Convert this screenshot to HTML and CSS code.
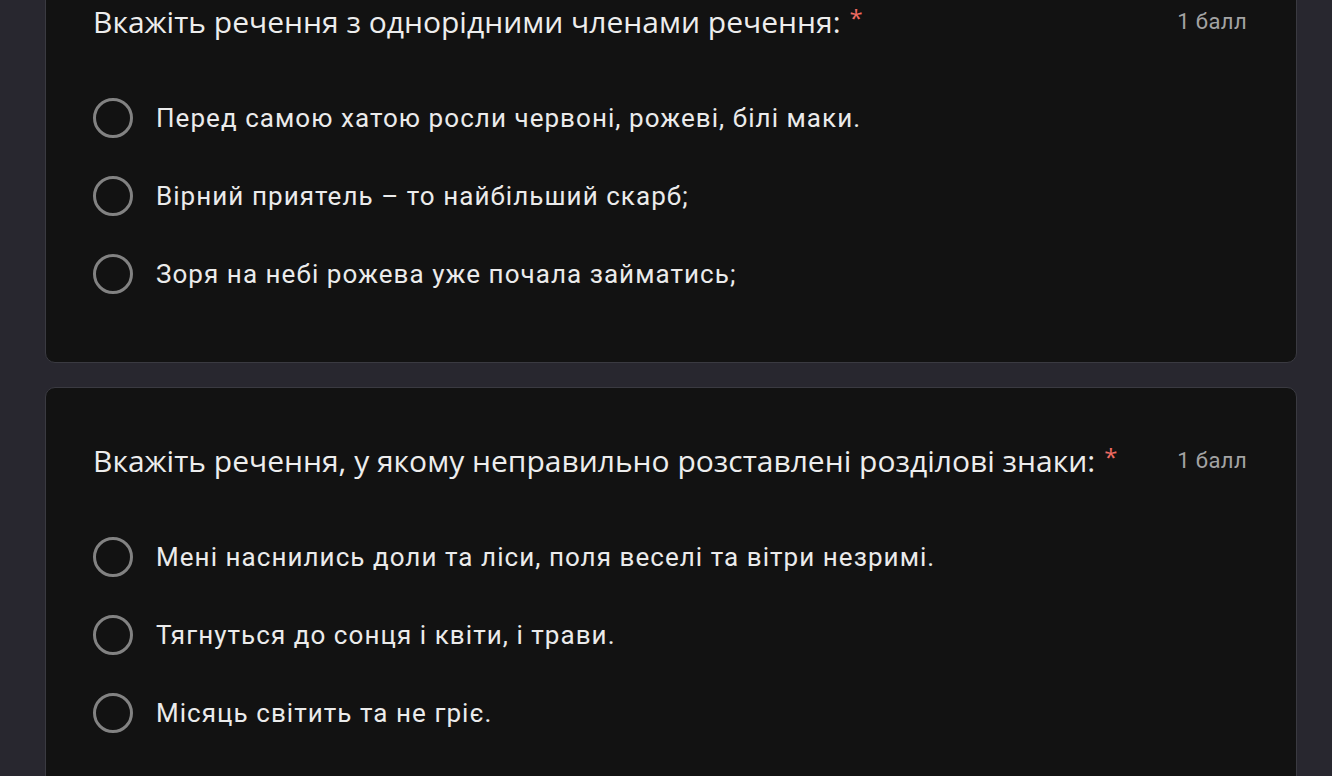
FILE: index.html
```html
<!DOCTYPE html>
<html lang="uk">
<head>
<meta charset="utf-8">
<link rel="stylesheet" href="styles.css">
</head>
<body>
<main class="page">
  <section class="card card-first">
    <div class="q-head">
      <h2 class="q-title">Вкажіть речення з однорідними членами речення:<span class="req">*</span></h2>
      <span class="points">1 балл</span>
    </div>
    <ul class="options">
      <li class="option"><span class="radio"></span><span class="opt-text">Перед самою хатою росли червоні, рожеві, білі маки.</span></li>
      <li class="option"><span class="radio"></span><span class="opt-text">Вірний приятель – то найбільший скарб;</span></li>
      <li class="option"><span class="radio"></span><span class="opt-text">Зоря на небі рожева уже почала займатись;</span></li>
    </ul>
  </section>
  <section class="card">
    <div class="q-head">
      <h2 class="q-title">Вкажіть речення, у якому неправильно розставлені розділові знаки:<span class="req">*</span></h2>
      <span class="points">1 балл</span>
    </div>
    <ul class="options">
      <li class="option"><span class="radio"></span><span class="opt-text">Мені наснились доли та ліси, поля веселі та вітри незримі.</span></li>
      <li class="option"><span class="radio"></span><span class="opt-text">Тягнуться до сонця і квіти, і трави.</span></li>
      <li class="option"><span class="radio"></span><span class="opt-text">Місяць світить та не гріє.</span></li>
    </ul>
  </section>
</main>
</body>
</html>
```
FILE: styles.css
```css
html, body {
  margin: 0;
  padding: 0;
  background: #28272f;
  overflow: hidden;
}
.page {
  width: 1252px;
  margin-left: 45px;
  display: flex;
  flex-direction: column;
  gap: 24px;
}
.card {
  background: #121212;
  border: 1px solid #3a3a41;
  border-radius: 10px;
  padding: 52px 48px 49px 47px;
}
.card-first {
  margin-top: -52px;
}
.q-head {
  display: flex;
  align-items: center;
  justify-content: space-between;
  height: 40px;
}
.q-title {
  margin: 0;
  font-family: "Open Sans", "Noto Sans", sans-serif;
  font-weight: 400;
  font-size: 30px;
  color: #ededed;
  letter-spacing: 0;
}
.req {
  color: #ef6b62;
  margin-left: 9px;
  font-size: 24px;
  vertical-align: 6px;
}
.points {
  font-family: Roboto, "Liberation Sans", sans-serif;
  font-size: 22px;
  color: #a3a3a3;
  padding-right: 1px;
  letter-spacing: 0.4px;
}
.options {
  list-style: none;
  margin: 38px 0 0;
  padding: 0;
}
.option {
  display: flex;
  align-items: center;
  height: 78px;
}
.radio {
  box-sizing: border-box;
  width: 40px;
  height: 40px;
  border: 3px solid #828282;
  border-radius: 50%;
  margin-right: 23px;
  flex: none;
}
.opt-text {
  font-family: Roboto, "Liberation Sans", sans-serif;
  font-size: 26px;
  letter-spacing: 1.05px;
  color: #ebebeb;
}
```
